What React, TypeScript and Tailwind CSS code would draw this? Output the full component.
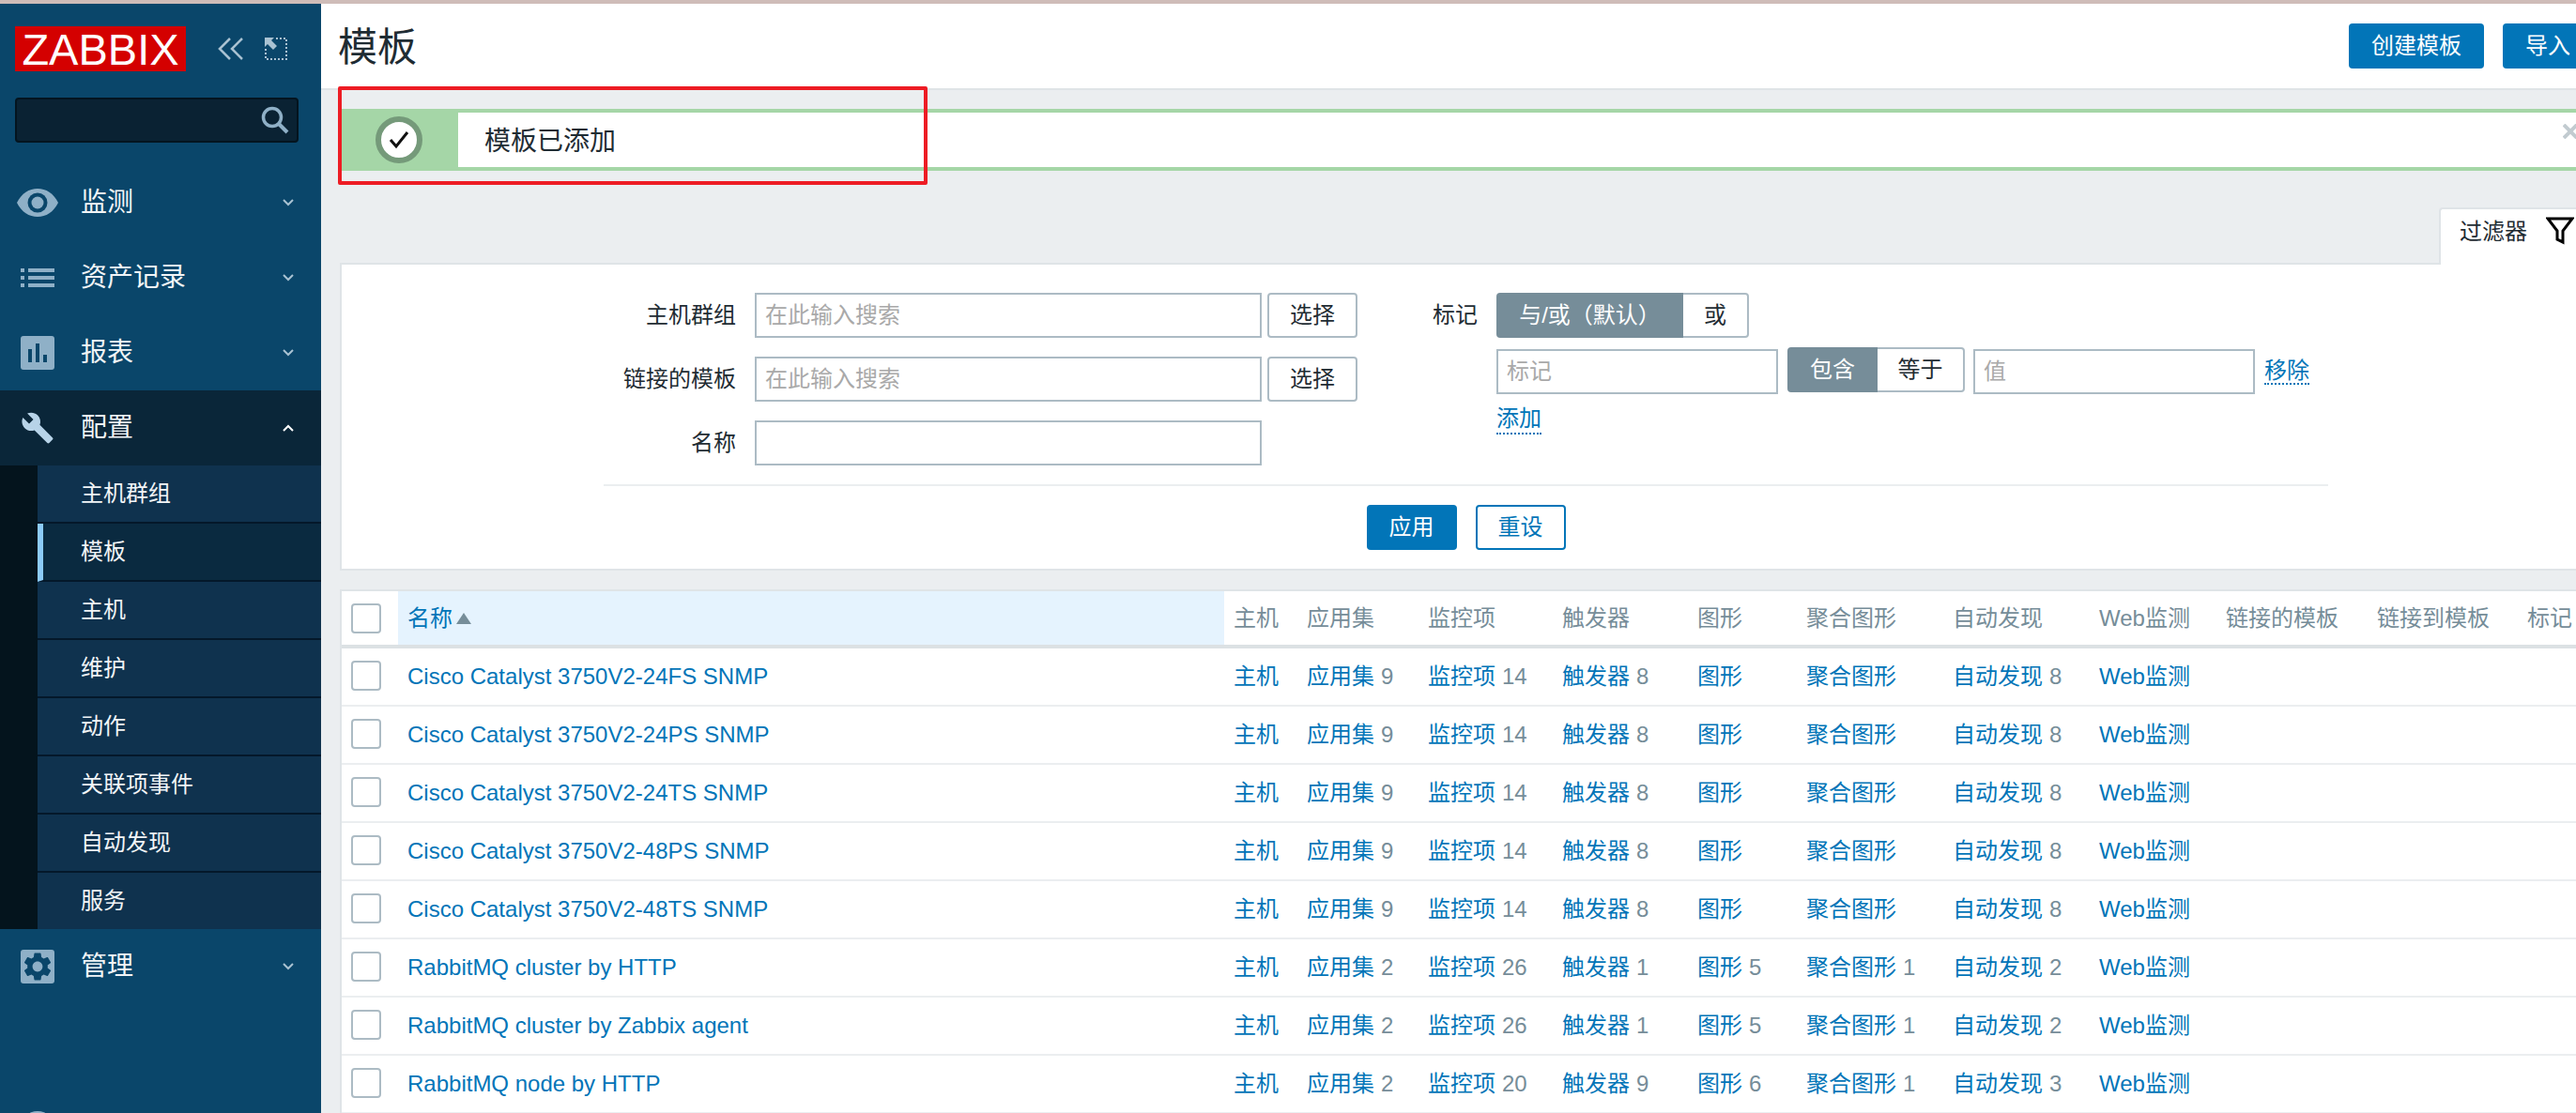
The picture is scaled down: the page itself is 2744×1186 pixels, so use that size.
import React from 'react';

const gridCols =
  'grid grid-cols-[60px_880px_78px_129px_143px_144px_116px_156px_156px_135px_161px_160px_100px]';

const headers = ['主机', '应用集', '监控项', '触发器', '图形', '聚合图形', '自动发现', 'Web监测', '链接的模板', '链接到模板', '标记'];

const rows = [
  { name: 'Cisco Catalyst 3750V2-24FS SNMP', apps: 9, items: 14, triggers: 8, graphs: 0, screens: 0, discovery: 8 },
  { name: 'Cisco Catalyst 3750V2-24PS SNMP', apps: 9, items: 14, triggers: 8, graphs: 0, screens: 0, discovery: 8 },
  { name: 'Cisco Catalyst 3750V2-24TS SNMP', apps: 9, items: 14, triggers: 8, graphs: 0, screens: 0, discovery: 8 },
  { name: 'Cisco Catalyst 3750V2-48PS SNMP', apps: 9, items: 14, triggers: 8, graphs: 0, screens: 0, discovery: 8 },
  { name: 'Cisco Catalyst 3750V2-48TS SNMP', apps: 9, items: 14, triggers: 8, graphs: 0, screens: 0, discovery: 8 },
  { name: 'RabbitMQ cluster by HTTP', apps: 2, items: 26, triggers: 1, graphs: 5, screens: 1, discovery: 2 },
  { name: 'RabbitMQ cluster by Zabbix agent', apps: 2, items: 26, triggers: 1, graphs: 5, screens: 1, discovery: 2 },
  { name: 'RabbitMQ node by HTTP', apps: 2, items: 20, triggers: 9, graphs: 6, screens: 1, discovery: 3 },
];

const subItems = ['主机群组', '模板', '主机', '维护', '动作', '关联项事件', '自动发现', '服务'];

function Chevron({ up }: { up?: boolean }) {
  return (
    <svg width="14" height="10" viewBox="0 0 14 10" fill="none" className={up ? 'stroke-white' : 'stroke-[#a9c2d2]'}>
      <path d={up ? 'M2 8l5-5 5 5' : 'M2 2l5 5 5-5'} strokeWidth="2" />
    </svg>
  );
}

function EyeIcon() {
  return (
    <svg width="44" height="30" viewBox="0 0 44 30">
      <path d="M0 15C5 5 13 0 22 0s17 5 22 15c-5 10-13 15-22 15S5 25 0 15z" fill="#8fb0c7" />
      <circle cx="22" cy="15" r="10.5" fill="#0a466a" />
      <circle cx="22" cy="15" r="6.5" fill="#8fb0c7" />
    </svg>
  );
}

function ListIcon() {
  return (
    <svg width="36" height="20" viewBox="0 0 36 20" fill="#8fb0c7">
      <rect x="0" y="0" width="4" height="4" />
      <rect x="8" y="0" width="28" height="4" />
      <rect x="0" y="8" width="4" height="4" />
      <rect x="8" y="8" width="28" height="4" />
      <rect x="0" y="16" width="4" height="4" />
      <rect x="8" y="16" width="28" height="4" />
    </svg>
  );
}

function ReportIcon() {
  return (
    <svg width="36" height="36" viewBox="0 0 36 36">
      <rect width="36" height="36" rx="3" fill="#8fb0c7" />
      <rect x="8" y="14" width="4" height="14" fill="#0a466a" />
      <rect x="16" y="8" width="4" height="20" fill="#0a466a" />
      <rect x="24" y="20" width="4" height="8" fill="#0a466a" />
    </svg>
  );
}

function WrenchIcon() {
  return (
    <svg width="36" height="36" viewBox="0 0 24 24" fill="#b7d3e8">
      <path d="M22.7 19l-9.1-9.1c.9-2.3.4-5-1.5-6.9-2-2-5-2.4-7.4-1.3L9 6 6 9 1.6 4.7C.4 7.1.9 10.1 2.9 12.1c1.9 1.9 4.6 2.4 6.9 1.5l9.1 9.1c.4.4 1 .4 1.4 0l2.3-2.3c.5-.4.5-1.1.1-1.4z" />
    </svg>
  );
}

function GearIcon() {
  return (
    <svg width="36" height="36" viewBox="0 0 24 24">
      <rect width="24" height="24" rx="2" fill="#8fb0c7" />
      <path
        fill="#0a466a"
        fillRule="evenodd"
        d="M19.14 12.94c.04-.3.06-.61.06-.94 0-.32-.02-.64-.07-.94l2.03-1.58c.18-.14.23-.41.12-.61l-1.92-3.32c-.12-.22-.37-.29-.59-.22l-2.39.96c-.5-.38-1.03-.7-1.62-.94l-.36-2.54c-.04-.24-.24-.41-.48-.41h-3.84c-.24 0-.43.17-.47.41l-.36 2.54c-.59.24-1.13.57-1.62.94l-2.39-.96c-.22-.08-.47 0-.59.22L2.74 8.87c-.12.21-.08.47.12.61l2.03 1.58c-.05.3-.09.63-.09.94s.02.64.07.94l-2.03 1.58c-.18.14-.23.41-.12.61l1.92 3.32c.12.22.37.29.59.22l2.39-.96c.5.38 1.03.7 1.62.94l.36 2.54c.05.24.24.41.48.41h3.84c.24 0 .44-.17.47-.41l.36-2.54c.59-.24 1.13-.56 1.62-.94l2.39.96c.22.08.47 0 .59-.22l1.92-3.32c.12-.22.07-.47-.12-.61l-2.01-1.58zM12 15.6c-1.98 0-3.6-1.62-3.6-3.6s1.62-3.6 3.6-3.6 3.6 1.62 3.6 3.6-1.62 3.6-3.6 3.6z"
      />
    </svg>
  );
}

function MenuItem({ icon, label, open }: { icon: React.ReactNode; label: string; open?: boolean }) {
  return (
    <div className={`flex h-20 items-center pl-[18px] pr-7 ${open ? 'bg-[#0a2639]' : ''}`}>
      <div className="flex w-11 justify-center">{icon}</div>
      <span className="ml-6 flex-1 text-[28px] text-[#f2f5f7]">{label}</span>
      <Chevron up={open} />
    </div>
  );
}

function Sidebar() {
  return (
    <aside className="flex w-[342px] shrink-0 flex-col overflow-hidden bg-[#0a466a]">
      <div className="flex shrink-0 items-center pl-4 pt-6">
        <div className="flex h-12 w-[182px] items-center justify-center bg-[#d40000] text-[47px] leading-none text-white">
          ZABBIX
        </div>
        <svg width="28" height="24" viewBox="0 0 28 24" fill="none" stroke="#a9c2d2" strokeWidth="2.5" className="ml-[34px]">
          <path d="M13 1L2 12l11 11M26 1L15 12l11 11" />
        </svg>
        <svg width="24" height="24" viewBox="0 0 24 24" fill="none" className="ml-[22px]">
          <path d="M12 1h11v22H1V12" stroke="#a9c2d2" strokeWidth="2" strokeDasharray="2 2" />
          <path d="M0 0h10L7 3l6 6-4 4-6-6-3 3z" fill="#a9c2d2" />
        </svg>
      </div>
      <div className="relative ml-4 mr-6 mt-7 h-12 shrink-0 rounded-[4px] border-2 border-[#04141f] bg-[#0a2233]">
        <svg width="30" height="30" viewBox="0 0 30 30" fill="none" stroke="#8fb0c7" className="absolute right-[8px] top-[7px]">
          <circle cx="12" cy="12" r="9.5" strokeWidth="3.5" />
          <path d="M19 19l9 9" strokeWidth="4" />
        </svg>
      </div>
      <nav className="mt-6 shrink-0">
        <MenuItem icon={<EyeIcon />} label="监测" />
        <MenuItem icon={<ListIcon />} label="资产记录" />
        <MenuItem icon={<ReportIcon />} label="报表" />
        <MenuItem icon={<WrenchIcon />} label="配置" open />
        <div className="bg-[#04141d] pl-10">
          {subItems.map((item, i) => (
            <div
              key={item}
              className={`flex h-[62px] items-center border-b-2 border-[#04182a] text-2xl text-[#f2f5f7] last:h-[60px] last:border-b-0 ${
                i === 1 ? 'border-l-[6px] border-l-[#8ccbf8] bg-[#0a2a40] pl-10' : 'bg-[#0f324e] pl-[46px]'
              }`}
            >
              {item}
            </div>
          ))}
        </div>
        <MenuItem icon={<GearIcon />} label="管理" />
      </nav>
      <div className="ml-[22px] mt-[114px] h-9 w-9 shrink-0 rounded-full bg-[#8fb0c7]" />
    </aside>
  );
}

function TextInput({ placeholder, className }: { placeholder?: string; className: string }) {
  return (
    <input
      placeholder={placeholder}
      className={`h-12 border-2 border-[#acbbc4] bg-white pl-[9px] text-2xl outline-none placeholder:text-[#a9a9a9] ${className}`}
    />
  );
}

function SelectButton() {
  return (
    <button className="ml-[6px] h-12 w-24 rounded-[4px] border-2 border-[#acbbc4] bg-white text-2xl text-[#1f2c33]">选择</button>
  );
}

function FilterPanel() {
  return (
    <div className="border-2 border-[#dfe4e7] bg-white">
      <div className="flex pt-[30px]">
        <div className="flex w-[1082px] shrink-0 flex-col gap-5">
          {[
            { label: '主机群组', placeholder: '在此输入搜索', select: true },
            { label: '链接的模板', placeholder: '在此输入搜索', select: true },
            { label: '名称', placeholder: undefined, select: false },
          ].map((f) => (
            <div key={f.label} className="flex items-center">
              <label className="mr-5 w-[420px] text-right text-2xl text-[#1f2c33]">{f.label}</label>
              <TextInput placeholder={f.placeholder} className="w-[540px]" />
              {f.select && <SelectButton />}
            </div>
          ))}
        </div>
        <div className="ml-20 flex h-[184px]">
          <label className="mr-5 flex h-12 items-center text-2xl text-[#1f2c33]">标记</label>
          <div>
            <div className="flex h-12 w-[269px] text-2xl">
              <div className="flex w-[199px] items-center justify-center rounded-l-[4px] bg-[#768d99] text-white">与/或（默认）</div>
              <div className="flex flex-1 items-center justify-center rounded-r-[4px] border-2 border-l-0 border-[#acbbc4] text-[#1f2c33]">或</div>
            </div>
            <div className="mt-[10px] flex items-start">
              <TextInput placeholder="标记" className="mt-[2px] w-[300px]" />
              <div className="ml-[10px] flex h-12 w-[189px] text-2xl">
                <div className="flex w-24 items-center justify-center rounded-l-[4px] bg-[#768d99] text-white">包含</div>
                <div className="flex flex-1 items-center justify-center rounded-r-[4px] border-2 border-l-0 border-[#acbbc4] text-[#1f2c33]">等于</div>
              </div>
              <TextInput placeholder="值" className="ml-[9px] mt-[2px] w-[300px]" />
              <a className="ml-[10px] mt-[11px] border-b-2 border-dotted border-[#0275b8] text-2xl leading-[27px] text-[#0275b8]">移除</a>
            </div>
            <a className="mt-[11px] inline-block border-b-2 border-dotted border-[#0275b8] text-2xl leading-[30px] text-[#0275b8]">添加</a>
          </div>
        </div>
      </div>
      <div className="ml-[279px] mt-5 flex w-[1837px] justify-center gap-5 border-t-2 border-[#ebeef0] pb-5 pt-5">
        <button className="h-12 w-24 rounded-[4px] bg-[#0275b8] text-2xl text-white">应用</button>
        <button className="h-12 w-24 rounded-[4px] border-2 border-[#0275b8] bg-white text-2xl text-[#0275b8]">重设</button>
      </div>
    </div>
  );
}

function Checkbox() {
  return <div className="ml-[10px] h-8 w-8 rounded-[4px] border-2 border-[#acbbc4] bg-white" />;
}

function LinkCell({ label, count }: { label: string; count?: number }) {
  return (
    <div className="flex items-center pl-[10px]">
      <a className="text-[#0275b8]">{label}</a>
      {count ? <span className="ml-[7px] text-[#768d99]">{count}</span> : null}
    </div>
  );
}

function TemplateTable() {
  return (
    <div className="mt-5 border-l-2 border-t-2 border-[#dfe4e7] bg-white text-2xl">
      <div className={`${gridCols} h-[61px] border-b-4 border-[#dce1e4]`}>
        <div className="flex items-center">
          <Checkbox />
        </div>
        <div className="flex items-center bg-[#e5f3fe] pl-[10px] text-[#0275b8]">
          名称
          <svg width="16" height="12" viewBox="0 0 16 12" className="ml-1" fill="#768d99">
            <path d="M8 0l8 12H0z" />
          </svg>
        </div>
        {headers.map((h) => (
          <div key={h} className="flex items-center whitespace-nowrap pl-[10px] text-[#768d99]">
            {h}
          </div>
        ))}
      </div>
      {rows.map((r) => (
        <div key={r.name} className={`${gridCols} h-[62px] border-b-2 border-[#ebeef0]`}>
          <div className="flex items-center pb-[2px]">
            <Checkbox />
          </div>
          <div className="flex items-center pl-[10px]">
            <a className="text-[#0275b8]">{r.name}</a>
          </div>
          <LinkCell label="主机" />
          <LinkCell label="应用集" count={r.apps} />
          <LinkCell label="监控项" count={r.items} />
          <LinkCell label="触发器" count={r.triggers} />
          <LinkCell label="图形" count={r.graphs} />
          <LinkCell label="聚合图形" count={r.screens} />
          <LinkCell label="自动发现" count={r.discovery} />
          <LinkCell label="Web监测" />
        </div>
      ))}
    </div>
  );
}

export default function App() {
  return (
    <div className="relative flex h-[1186px] w-[2744px] flex-col overflow-hidden bg-[#ebeef0] font-['Liberation_Sans','Noto_Sans_CJK_SC',sans-serif]">
      <div className="h-1 shrink-0 bg-[#cfbcb8]" />
      <div className="flex min-h-0 flex-1">
        <Sidebar />
        <main className="min-w-0 flex-1 overflow-hidden">
          <div className="w-[2460px]">
            <header className="flex h-[92px] items-center justify-between border-b-2 border-[#dfe4e7] bg-white pl-5 pr-10">
              <h1 className="-ml-[2px] pt-[2px] text-[42px] font-normal text-[#1f2c33]">模板</h1>
              <div className="flex gap-5">
                <button className="h-12 w-36 rounded-[4px] bg-[#0275b8] text-2xl text-white">创建模板</button>
                <button className="h-12 w-24 rounded-[4px] bg-[#0275b8] text-2xl text-white">导入</button>
              </div>
            </header>
            <div className="px-5">
              <div className="mt-5 flex h-[66px] border-4 border-l-0 border-[#a5d6a7] bg-white">
                <div className="flex w-[126px] items-center justify-center pr-[1px] bg-[#a5d6a7]">
                  <div className="flex h-[50px] w-[50px] items-center justify-center rounded-full border-[6px] border-[#759a7a] bg-white">
                    <svg width="24" height="20" viewBox="0 0 24 20" fill="none" stroke="#111" strokeWidth="3">
                      <path d="M3 10l6 7L21 2" />
                    </svg>
                  </div>
                </div>
                <div className="flex flex-1 items-center pl-7 pt-[3px] text-[28px] text-[#1f2c33]">模板已添加</div>
                <svg width="16" height="16" viewBox="0 0 16 16" stroke="#c2cbd0" strokeWidth="4" className="mr-8 mt-3">
                  <path d="M1 1l14 14M15 1L1 15" />
                </svg>
              </div>
              <div className="mt-[39px] flex justify-end">
                <div className="-mb-[2px] z-10 flex h-[61px] w-[184px] items-start rounded-tl-[4px] border-l-2 border-t-2 border-[#dfe4e7] bg-white pl-5 pt-[8px]">
                  <span className="text-2xl text-[#1f2c33]">过滤器</span>
                  <svg width="30" height="30" viewBox="0 0 30 30" fill="none" stroke="#000" strokeWidth="3" className="ml-5">
                    <path d="M2 2h26L18 15v12l-6-3v-9z" />
                  </svg>
                </div>
              </div>
              <FilterPanel />
              <TemplateTable />
            </div>
          </div>
        </main>
      </div>
      <div className="absolute left-[360px] top-[92px] h-[105px] w-[628px] rounded-[2px] border-[4px] border-[#ed1c24]" />
    </div>
  );
}
